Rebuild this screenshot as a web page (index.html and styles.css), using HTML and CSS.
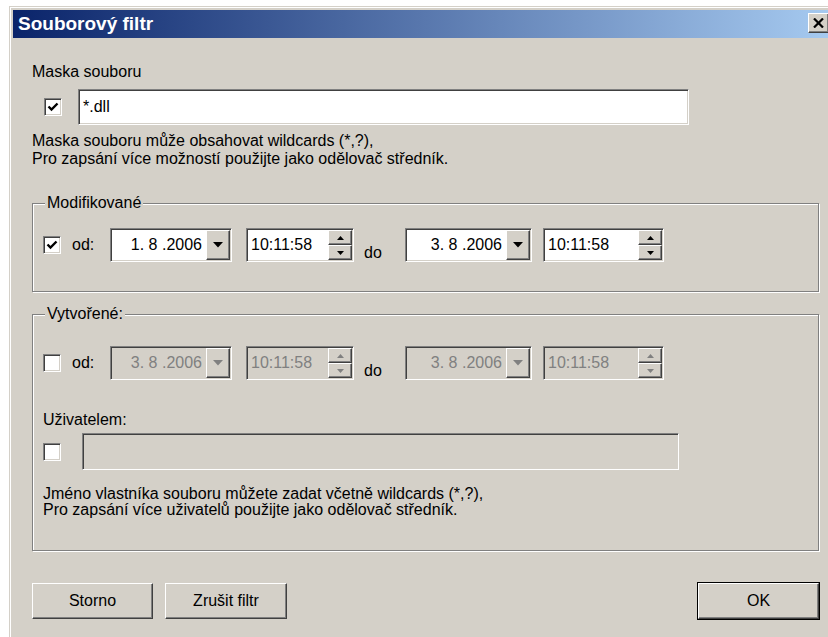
FILE: index.html
```html
<!DOCTYPE html>
<html lang="cs">
<head>
<meta charset="utf-8">
<title>Souborový filtr</title>
<link rel="stylesheet" href="styles.css">
</head>
<body>
<div class="window">
  <div class="frame">
    <div class="titlebar">
      <span class="title">Souborový filtr</span>
      <span class="close-btn raised">
        <svg width="11" height="10" viewBox="0 0 11 10"><path d="M1 0.5 L10 9.5 M10 0.5 L1 9.5" stroke="#000" stroke-width="2.2" fill="none"/></svg>
      </span>
    </div>

    <div class="content">
      <div class="label">Maska souboru</div>
      <div class="mask-row">
        <span class="checkbox checked"><svg width="14" height="14" viewBox="0 0 14 14"><path d="M2.5 6.5 L5.5 9.5 L11.5 3.5" stroke="#000" stroke-width="2.4" fill="none"/></svg></span>
        <div class="edit mask-edit">*.dll</div>
      </div>
      <div class="hint mask-hint">Maska souboru může obsahovat wildcards (*,?),<br>Pro zapsání více možností použijte jako odělovač středník.</div>

      <div class="group group-modified">
        <span class="group-title">Modifikované</span>
        <div class="range-row">
          <span class="checkbox checked"><svg width="14" height="14" viewBox="0 0 14 14"><path d="M2.5 6.5 L5.5 9.5 L11.5 3.5" stroke="#000" stroke-width="2.4" fill="none"/></svg></span>
          <span class="row-text od">od:</span>
          <div class="datebox date-from"><span class="date-value">1. 8 .2006</span><span class="drop-btn raised"><svg width="10" height="6" viewBox="0 0 10 6"><polygon points="0,0 10,0 5,5.5" fill="#000"/></svg></span></div>
          <div class="timebox time-from"><span class="time-value">10:11:58</span><span class="spin"><span class="spin-btn raised"><svg width="7" height="4" viewBox="0 0 7 4"><polygon points="0,4 7,4 3.5,0" fill="#000"/></svg></span><span class="spin-btn raised"><svg width="7" height="4" viewBox="0 0 7 4"><polygon points="0,0 7,0 3.5,4" fill="#000"/></svg></span></span></div>
          <span class="row-text do">do</span>
          <div class="datebox date-to"><span class="date-value">3. 8 .2006</span><span class="drop-btn raised"><svg width="10" height="6" viewBox="0 0 10 6"><polygon points="0,0 10,0 5,5.5" fill="#000"/></svg></span></div>
          <div class="timebox time-to"><span class="time-value">10:11:58</span><span class="spin"><span class="spin-btn raised"><svg width="7" height="4" viewBox="0 0 7 4"><polygon points="0,4 7,4 3.5,0" fill="#000"/></svg></span><span class="spin-btn raised"><svg width="7" height="4" viewBox="0 0 7 4"><polygon points="0,0 7,0 3.5,4" fill="#000"/></svg></span></span></div>
        </div>
      </div>

      <div class="group group-created">
        <span class="group-title">Vytvořené:</span>
        <div class="range-row disabled">
          <span class="checkbox"></span>
          <span class="row-text od">od:</span>
          <div class="datebox date-from"><span class="date-value">3. 8 .2006</span><span class="drop-btn raised"><svg width="10" height="6" viewBox="0 0 10 6"><polygon points="0,0 10,0 5,5.5" fill="#808080"/></svg></span></div>
          <div class="timebox time-from"><span class="time-value">10:11:58</span><span class="spin"><span class="spin-btn raised"><svg width="7" height="4" viewBox="0 0 7 4"><polygon points="0,4 7,4 3.5,0" fill="#808080"/></svg></span><span class="spin-btn raised"><svg width="7" height="4" viewBox="0 0 7 4"><polygon points="0,0 7,0 3.5,4" fill="#808080"/></svg></span></span></div>
          <span class="row-text do">do</span>
          <div class="datebox date-to"><span class="date-value">3. 8 .2006</span><span class="drop-btn raised"><svg width="10" height="6" viewBox="0 0 10 6"><polygon points="0,0 10,0 5,5.5" fill="#808080"/></svg></span></div>
          <div class="timebox time-to"><span class="time-value">10:11:58</span><span class="spin"><span class="spin-btn raised"><svg width="7" height="4" viewBox="0 0 7 4"><polygon points="0,4 7,4 3.5,0" fill="#808080"/></svg></span><span class="spin-btn raised"><svg width="7" height="4" viewBox="0 0 7 4"><polygon points="0,0 7,0 3.5,4" fill="#808080"/></svg></span></span></div>
        </div>
        <div class="label user-label">Uživatelem:</div>
        <div class="user-row">
          <span class="checkbox"></span>
          <div class="edit user-edit disabled"></div>
        </div>
        <div class="hint user-hint">Jméno vlastníka souboru můžete zadat včetně wildcards (*,?),<br>Pro zapsání více uživatelů použijte jako odělovač středník.</div>
      </div>

      <div class="buttons">
        <button class="btn raised">Storno</button>
        <button class="btn raised clear-btn">Zrušit filtr</button>
        <button class="btn raised default-btn">OK</button>
      </div>
    </div>
  </div>
</div>
</body>
</html>
```

FILE: styles.css
```css
/* Classic Windows dialog: "Souborový filtr" */
html, body {
  margin: 0;
  background: #ffffff;
  overflow: hidden;
}

body {
  font-family: "Liberation Sans", Arial, sans-serif;
  font-size: 16px;
  line-height: 18px;
  color: #000;
}

.window {
  margin: 6px 0 0 9px;
  width: 830px;
  height: 640px;
  border-top: 1px solid #d4d0c8;
  border-left: 1px solid #d4d0c8;
}

.frame {
  height: 100%;
  border-top: 1px solid #ffffff;
  border-left: 1px solid #ffffff;
  padding: 2px 0 0 2px;
  background: #d4d0c8;
}

/* 3D edges */
.raised {
  box-sizing: border-box;
  border: 1px solid;
  border-color: #ffffff #404040 #404040 #ffffff;
  box-shadow: inset -1px -1px 0 #808080, inset 1px 1px 0 #d4d0c8;
  background: #d4d0c8;
}

/* Title bar */
.titlebar {
  width: 818px;
  height: 28px;
  display: flex;
  justify-content: space-between;
  align-items: flex-start;
  background: linear-gradient(to right, #0a246a, #a6caf0);
}

.title {
  color: #fff;
  font-weight: bold;
  font-size: 19px;
  line-height: 28px;
  padding-left: 5px;
}

.close-btn {
  width: 21px;
  height: 20px;
  margin: 3px 2px 0 0;
  display: flex;
  align-items: center;
  justify-content: center;
}

/* Dialog body */
.content {
  width: 787px;
  padding: 25px 12px 0 19px;
}

.label {
  height: 18px;
}

.checkbox {
  box-sizing: border-box;
  width: 18px;
  height: 18px;
  flex: none;
  background: #fff;
  border: 1px solid;
  border-color: #808080 #ffffff #ffffff #808080;
  box-shadow: inset 1px 1px 0 #404040, inset -1px -1px 0 #d4d0c8;
  display: flex;
  align-items: center;
  justify-content: center;
}

.edit {
  box-sizing: border-box;
  background: #fff;
  border: 1px solid;
  border-color: #808080 #ffffff #ffffff #808080;
  box-shadow: inset 1px 1px 0 #404040, inset -1px -1px 0 #d4d0c8;
  display: flex;
  align-items: center;
  padding-left: 4px;
}

.edit.disabled {
  background: #d4d0c8;
}

.mask-row {
  display: flex;
  align-items: center;
  height: 36px;
  margin-top: 8px;
}

.mask-row .checkbox {
  margin-left: 12px;
}

.mask-edit {
  width: 611px;
  height: 36px;
  margin-left: 16px;
}

.hint {
  line-height: 18px;
}

.mask-hint {
  margin-top: 7px;
}

/* Group boxes with etched frame */
.group {
  position: relative;
  box-sizing: border-box;
  border: 1px solid #808080;
  box-shadow: inset 1px 1px 0 #ffffff, 1px 1px 0 #ffffff;
}

.group-title {
  position: absolute;
  top: -10px;
  left: 12px;
  padding: 0 2px;
  background: #d4d0c8;
  line-height: 18px;
}

.group-modified {
  margin-top: 35px;
  height: 89px;
  padding-top: 24px;
}

.group-created {
  margin-top: 22px;
  height: 237px;
  padding-top: 31px;
}

/* Date / time range row */
.range-row {
  display: flex;
  align-items: center;
  height: 34px;
}

.range-row .checkbox {
  margin-left: 10px;
}

.row-text {
  flex: none;
}

.od {
  width: 38px;
  margin-left: 11px;
}

.do {
  width: 41px;
  margin-left: 10px;
  align-self: flex-end;
  height: 18px;
}

.datebox,
.timebox {
  box-sizing: border-box;
  height: 34px;
  flex: none;
  display: flex;
  align-items: stretch;
  background: #fff;
  border: 1px solid;
  border-color: #808080 #ffffff #ffffff #808080;
  box-shadow: inset 1px 1px 0 #404040, inset -1px -1px 0 #d4d0c8;
  padding: 1px;
}

.date-from { width: 122px; }
.date-to { width: 127px; }
.time-from { width: 108px; margin-left: 14px; }
.time-to { width: 121px; margin-left: 11px; }

.date-value {
  flex: 1;
  text-align: right;
  padding-right: 4px;
  align-self: center;
}

.time-value {
  flex: 1;
  padding-left: 3px;
  align-self: center;
}

.drop-btn {
  width: 24px;
  display: flex;
  align-items: center;
  justify-content: center;
}

.spin {
  width: 24px;
  display: flex;
  flex-direction: column;
}

.spin-btn {
  flex: 1;
  display: flex;
  align-items: center;
  justify-content: center;
}

.range-row.disabled .datebox,
.range-row.disabled .timebox {
  background: #d4d0c8;
  color: #808080;
}

/* Owner filter */
.user-label {
  margin-top: 31px;
  margin-left: 10px;
}

.user-row {
  display: flex;
  align-items: center;
  height: 37px;
  margin-top: 4px;
}

.user-row .checkbox {
  margin-left: 10px;
}

.user-edit {
  width: 597px;
  height: 37px;
  margin-left: 21px;
}

.user-hint {
  margin-top: 16px;
  margin-left: 10px;
  line-height: 16px;
}

/* Bottom buttons */
.buttons {
  display: flex;
  margin-top: 32px;
}

.btn {
  width: 121px;
  height: 36px;
  padding: 0;
  font: inherit;
  color: #000;
  line-height: 18px;
}

.clear-btn {
  width: 122px;
  margin-left: 12px;
}

.default-btn {
  margin-left: auto;
  outline: 1px solid #000;
  outline-offset: 0;
  border-color: #ffffff #404040 #404040 #ffffff;
}
```
